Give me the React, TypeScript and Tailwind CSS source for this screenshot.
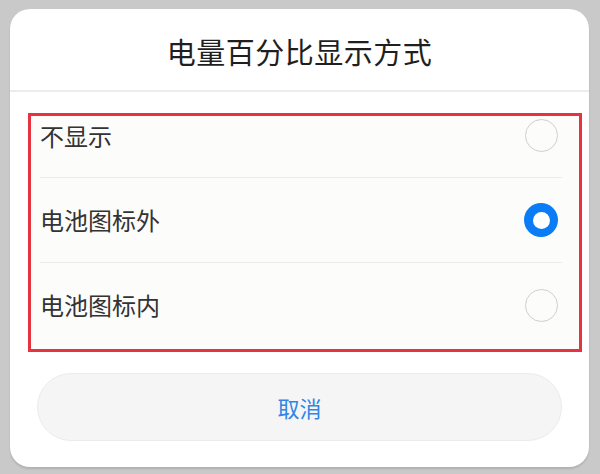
const options = [
  { label: '不显示', checked: false, row: 'h-[61px] pb-[22px]' },
  { label: '电池图标外', checked: true, row: 'h-[84px]' },
  { label: '电池图标内', checked: false, row: 'h-[86px] pb-[2px]' },
];

function Radio({ checked }: { checked: boolean }) {
  if (checked) {
    return (
      <span className="flex h-[34px] w-[34px] items-center justify-center rounded-full bg-[#0a7cf6]">
        <span className="h-[17px] w-[17px] rounded-full bg-white" />
      </span>
    );
  }
  return <span className="block h-[33px] w-[33px] rounded-full border-[1.5px] border-[#cfcfcf]" />;
}

export default function App() {
  return (
    <div
      className="h-[474px] w-[600px] overflow-hidden bg-[#c9c9c9] pl-[10px] pr-[11px] pt-[9px]"
      style={{ fontFamily: '"Noto Sans CJK SC", "Noto Sans", sans-serif' }}
    >
      <div className="flex h-[458px] flex-col rounded-[20px] bg-white shadow-[0_2px_2px_rgba(0,0,0,0.12)]">
        {/* Title */}
        <div className="flex h-[81px] items-center justify-center pt-[4px]">
          <h2 className="text-[29px] leading-none tracking-[0.5px] text-[#1f1f1f]">电量百分比显示方式</h2>
        </div>
        <div className="h-[2px] bg-[#ececec]" />

        {/* Options */}
        <div className="ml-[18px] mr-[7px] mt-[21px] border-[3px] border-[#e5333f] bg-[#fcfcfa]">
          {options.map((opt, i) => (
            <div key={opt.label}>
              {i > 0 && <div className="ml-[9px] mr-[17px] h-px bg-[#ebebeb]" />}
              <div className={`flex items-center justify-between pl-[9px] pr-[21px] ${opt.row}`}>
                <span className="text-[24px] leading-none text-[#333333]">{opt.label}</span>
                <Radio checked={opt.checked} />
              </div>
            </div>
          ))}
        </div>

        {/* Cancel */}
        <div className="mx-[27px] mt-[21px]">
          <button className="flex h-[68px] w-full items-center justify-center rounded-full border border-[#ebebeb] bg-[#f5f5f5] text-[22px] text-[#2f86e6]">
            取消
          </button>
        </div>
      </div>
    </div>
  );
}
